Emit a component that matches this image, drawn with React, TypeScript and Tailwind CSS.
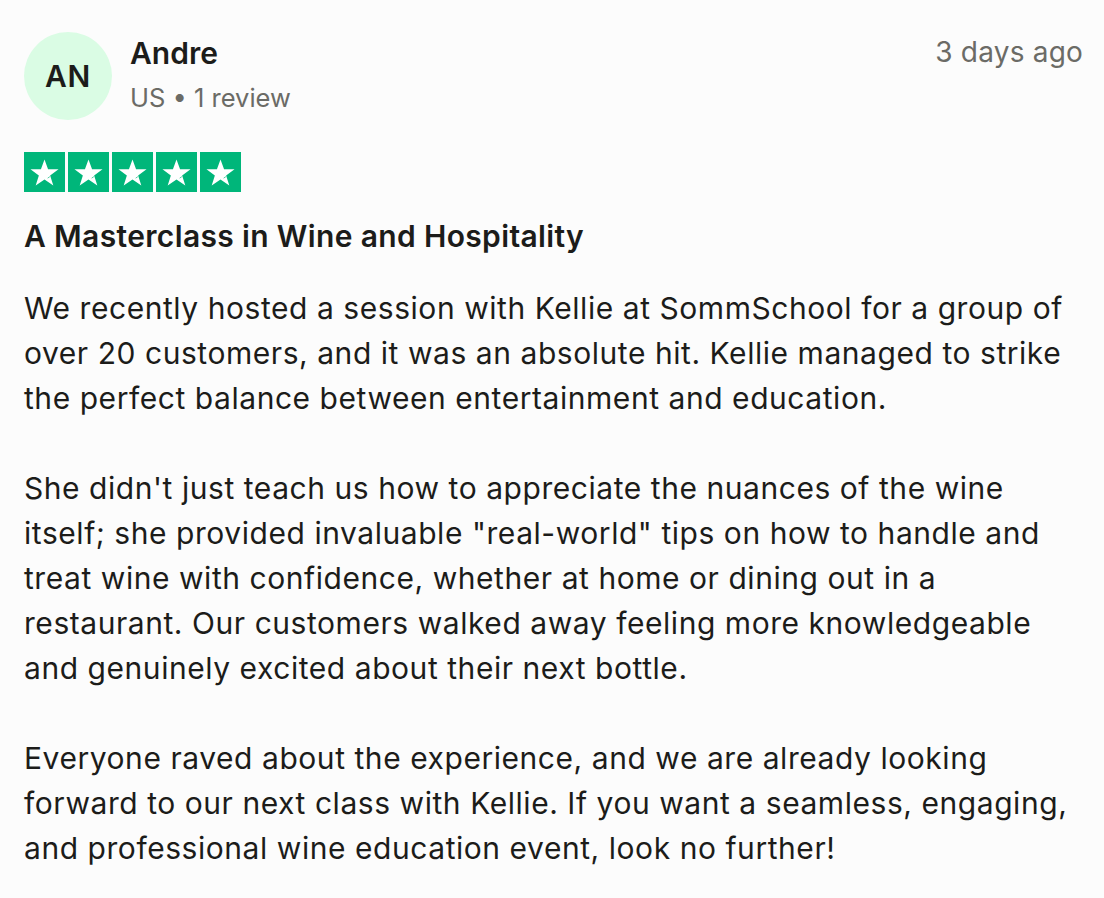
import React from 'react';

const Star = () => (
  <div className="w-[41px] h-[40px] bg-[#00b67a] flex items-center justify-center">
    <svg viewBox="0 0 24 24" className="w-[33px] h-[33px]" fill="white">
      <path d="M12 2.5l2.6 7.2h7.6l-6.1 4.5 2.3 7.3L12 17l-6.4 4.5 2.3-7.3-6.1-4.5h7.6z" />
      <path d="M14.3 16.1l1.6-1.1" stroke="#00b67a" strokeWidth="0.5" />
    </svg>
  </div>
);

export default function App() {
  return (
    <div className="min-h-screen bg-[#fcfcfc] text-[#1c1c1a] px-[24px] pt-[32px]" style={{ fontFamily: 'Inter, "Noto Sans", sans-serif' }}>
      <div className="flex items-start">
        <div className="w-[88px] h-[88px] rounded-full bg-[#dafce4] flex items-center justify-center text-[30px] font-semibold tracking-[0.8px] shrink-0">
          AN
        </div>
        <div className="ml-[18px] flex-1">
          <div className="text-[30px] font-semibold leading-[40px] mt-[1px]">Andre</div>
          <div className="text-[25.5px] text-[#6b6b66] leading-[36px] mt-[7px]">US • 1 review</div>
        </div>
        <div className="text-[28px] text-[#6b6b66] leading-[40px] mr-[-3px] tracking-[0.2px]">3 days ago</div>
      </div>

      <div className="flex gap-[3px] mt-[32px]">
        <Star /><Star /><Star /><Star /><Star />
      </div>

      <h2 className="mt-[24px] text-[30px] font-semibold leading-[40px] tracking-[0.35px]">A Masterclass in Wine and Hospitality</h2>

      <div className="mt-[30px] text-[30px] leading-[45px] tracking-[0.55px] max-w-[1056px]">
        <p>We recently hosted a session with Kellie at SommSchool for a group of over 20 customers, and it was an absolute hit. Kellie managed to strike the perfect balance between entertainment and education.</p>
        <br />
        <p>She didn't just teach us how to appreciate the nuances of the wine itself; she provided invaluable "real-world" tips on how to handle and treat wine with confidence, whether at home or dining out in a restaurant. Our customers walked away feeling more knowledgeable and genuinely excited about their next bottle.</p>
        <br />
        <p>Everyone raved about the experience, and we are already looking forward to our next class with Kellie. If you want a seamless, engaging, and professional wine education event, look no further!</p>
      </div>
    </div>
  );
}
